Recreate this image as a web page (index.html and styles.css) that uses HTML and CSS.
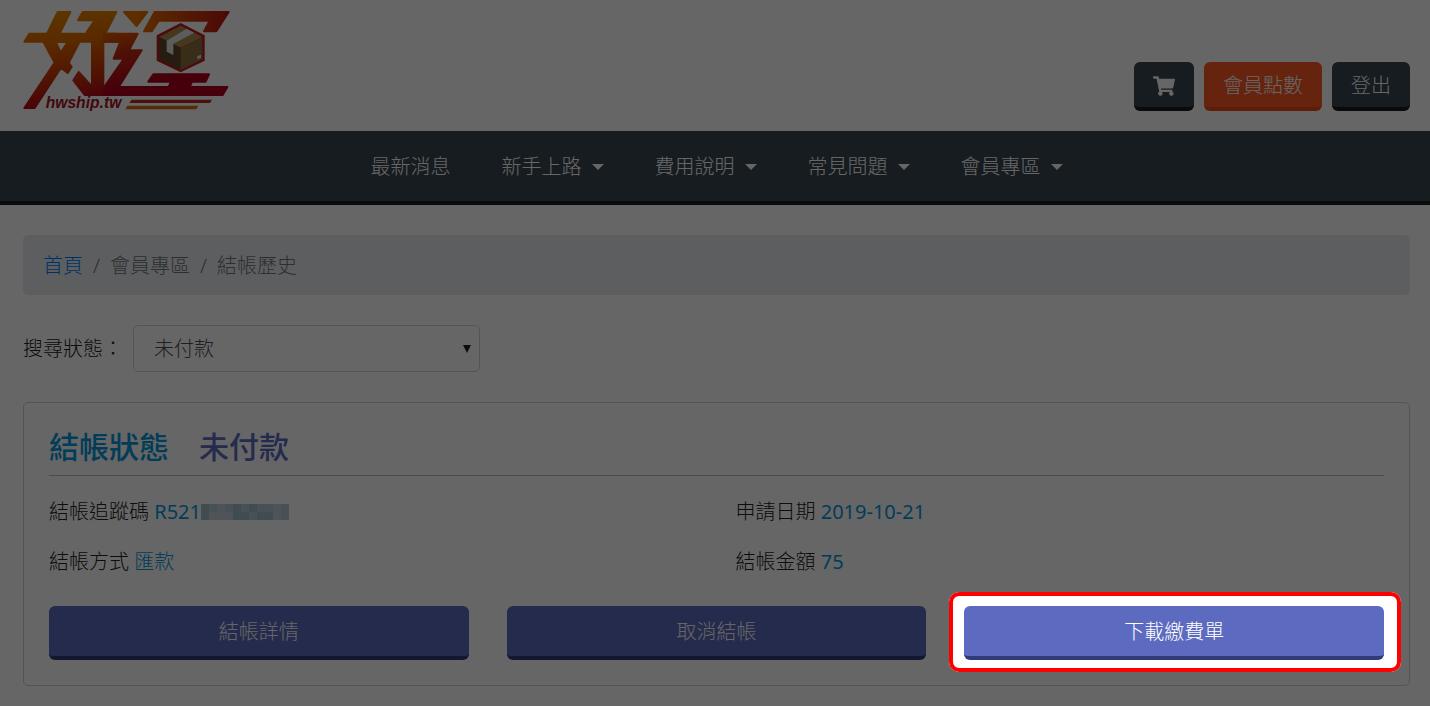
FILE: index.html
```
<!DOCTYPE html>
<html lang="zh-Hant">

<head>
    <meta charset="utf-8">
    <title>結帳歷史</title>
    <link rel="stylesheet" href="styles.css">
</head>

<body>
    <header class="header">
        <a class="logo" href="#" aria-label="hwship.tw">
            <svg width="210" height="104" viewBox="39 21 630 312">
                <defs>
                    <linearGradient id="fire" gradientUnits="userSpaceOnUse" x1="200" y1="30" x2="250" y2="320">
                        <stop offset="0" stop-color="#e88400" />
                        <stop offset=".3" stop-color="#e06a00" />
                        <stop offset=".65" stop-color="#c83408" />
                        <stop offset=".9" stop-color="#b80a18" />
                    </linearGradient>
                    <linearGradient id="road" gradientUnits="userSpaceOnUse" x1="310" y1="90" x2="360" y2="260">
                        <stop offset="0" stop-color="#e06000" />
                        <stop offset=".4" stop-color="#c42c10" />
                        <stop offset="1" stop-color="#b0001c" />
                    </linearGradient>
                    <linearGradient id="roof" gradientUnits="userSpaceOnUse" x1="380" y1="30" x2="650" y2="60">
                        <stop offset="0" stop-color="#e87400" />
                        <stop offset="1" stop-color="#c01814" />
                    </linearGradient>
                </defs>
                <g stroke-linejoin="round" stroke-width="6">
                    <path fill="url(#fire)" stroke="url(#fire)" fill-rule="evenodd" d="M143 36h38l-32 65h90l-9-5 24-35h-50l14-25h101l-33 65h34v24h-40v160h-56l-34-44 16-25 40 44V125h-37l-33 63 9 13-12 18-20-16-79 121H43l91-136-34-63H43l15-24h53zM137 126l15 32 21-32z" />
                    <path fill="url(#road)" stroke="url(#road)" d="M280 101h103l-26 50h38l-69 110h150l7-16h-68l15-22h167l-10 22h-41l-7 16h113l-14 24H280v-20l62-89h-31l20-51h-51z" />
                    <path fill="url(#roof)" stroke="url(#roof)" d="M342 36h70l-32 42zM434 36h222l-37 58h-37l17-32H446l-21 32h-23z" />
                </g>
                <path fill="#b82818" d="M365 299h241l-6 10H358z" />
                <path fill="#cc7410" d="M352 317h213l-6 11H346z" />
                <path fill="#c01820" d="M512 69l72 37v76l-72 35-72-35v-76z" />
                <path fill="#b08a50" d="M512 77l65 34-65 32-65-32z" />
                <path fill="#60482a" d="M447 111l65 32v67l-65-32z" />
                <path fill="#8c7040" d="M577 111l-65 32v67l65-32z" />
                <path fill="#e6e6e6" d="M530 86l23 12-63 33v34l-20-10v-33zM562 169l11-5v9l-11 5z" />
                <text class="logo-text" x="107" y="323">hwship.tw</text>
            </svg>
        </a>
        <div class="tools">
            <button class="btn btn-dark" type="button" aria-label="購物車">
                <svg width="22" height="20" viewBox="0 0 576 512" fill="currentColor">
                    <path d="M528 301l47-208c4-15-8-29-23-29H159l-9-45c-2-11-12-19-24-19H24C11 0 0 11 0 24v16c0 13 11 24 24 24h70l70 343a56 56 0 1 0 67 9h210a56 56 0 1 0 64-10l5-25c4-15-8-29-23-29H218l-6-32h293c11 0 20-8 23-19z" />
                </svg>
            </button>
            <button class="btn btn-orange" type="button">會員點數</button>
            <button class="btn btn-dark" type="button">登出</button>
        </div>
    </header>

    <nav class="nav">
        <a href="#">最新消息</a>
        <a class="dropdown" href="#">新手上路</a>
        <a class="dropdown" href="#">費用說明</a>
        <a class="dropdown" href="#">常見問題</a>
        <a class="dropdown" href="#">會員專區</a>
    </nav>

    <main class="content">
        <div class="breadcrumb">
            <a href="#">首頁</a>
            <span>會員專區</span>
            <span>結帳歷史</span>
        </div>

        <div class="search">
            <label for="status">搜尋狀態：</label>
            <div class="select">
                <select id="status">
                    <option>未付款</option>
                </select>
            </div>
        </div>

        <section class="card">
            <h2><span>結帳狀態</span><span class="state">未付款</span></h2>
            <div class="info">
                <div>結帳追蹤碼 <span class="value num">R521</span><svg class="mosaic" width="88" height="16" viewBox="0 0 11 2" shape-rendering="crispEdges">
                        <path fill="#b4ccd8" d="M0 0h11v2H0z" />
                        <path fill="#a0bccc" d="M0 0h1v2H0zM4 0h1v2H4zM5 1h1v1H5zM6 0h1v1H6zM7 1h2v1H7z" />
                        <path fill="#c8d0dc" d="M2 0h1v1H2zM1 1h3v1H1zM9 0h1v2H9z" />
                    </svg></div>
                <div>申請日期 <span class="value num">2019-10-21</span></div>
                <div>結帳方式 <span class="value">匯款</span></div>
                <div>結帳金額 <span class="value num">75</span></div>
            </div>
            <div class="actions">
                <button class="btn btn-indigo" type="button">結帳詳情</button>
                <button class="btn btn-indigo" type="button">取消結帳</button>
                <div class="spotlight">
                    <button class="btn btn-indigo" type="button">下載繳費單</button>
                </div>
            </div>
        </section>
    </main>
</body>
</html>
```

FILE: styles.css
```
* {
    box-sizing: border-box;
}

body {
    margin: 0;
    background: #fff;
    color: #212121;
    font: 300 20px/30px "Noto Sans", "Noto Sans CJK TC", sans-serif;
}

a {
    color: #007bff;
    text-decoration: none;
}

.header {
    display: flex;
    justify-content: space-between;
    align-items: flex-end;
    padding: 7px 20px 20px 23px;
}

.logo svg {
    display: block;
}

.logo-text {
    fill: #a81020;
    font: italic bold 47px "Liberation Sans", sans-serif;
}

.tools {
    display: flex;
    gap: 10px;
}

.btn {
    display: flex;
    align-items: center;
    justify-content: center;
    padding: 9px 19px 7px;
    border: 0;
    border-bottom: 4px solid;
    border-radius: 6px;
    color: #fff;
    font: inherit;
    cursor: pointer;
}

.tools .btn {
    height: 49px;
}

.btn-dark {
    background: #37474f;
    border-color: #1a1a1a;
}

.btn-orange {
    background: #ff5722;
    border-color: #e64a19;
}

.btn-indigo {
    width: 100%;
    height: 54px;
    background: #5c6bc0;
    border-color: #2f3c78;
}

.nav {
    display: flex;
    justify-content: center;
    gap: 51px;
    padding: 21px 20px 19px 23px;
    background: #37474f;
    border-bottom: 4px solid #1a1a1a;
}

.nav a {
    color: #fff;
}

.dropdown {
    display: flex;
    align-items: center;
    gap: 10px;
}

.dropdown::after {
    content: "";
    border: 6px solid transparent;
    border-top-color: #fff;
    border-bottom: 0;
}

.content {
    padding: 30px 20px 20px 23px;
}

.breadcrumb {
    display: flex;
    padding: 16px 20px 14px;
    border-radius: 5px;
    background: #e9ecef;
    color: #6c757d;
}

.breadcrumb span::before {
    content: "/";
    padding: 0 10px;
}

.search {
    display: flex;
    align-items: center;
    gap: 10px;
    margin: 30px 0;
}

.select {
    position: relative;
    width: 25%;
}

.select select {
    display: block;
    width: 100%;
    height: 47px;
    padding: 0 20px;
    border: 1px solid #ced4da;
    border-radius: 5px;
    background: #fff;
    color: #495057;
    font: inherit;
    appearance: none;
}

.select::after {
    content: "";
    position: absolute;
    top: 20px;
    right: 9px;
    border: 4px solid transparent;
    border-top: 8px solid #212121;
    border-bottom: 0;
    pointer-events: none;
}

.card {
    padding: 25px;
    border: 1px solid #d0d0d0;
    border-radius: 5px;
}

.card h2 {
    display: flex;
    gap: 30px;
    margin: 0 0 11px;
    padding-bottom: 9px;
    border-bottom: 1px solid #bdbdbd;
    color: #0398dc;
    font-size: 30px;
    font-weight: 500;
    line-height: 38px;
}

.card .state {
    color: #5c6bc0;
}

.info {
    display: grid;
    grid-template-columns: 1fr 1fr;
    column-gap: 38px;
    line-height: 50px;
}

.value {
    color: #0398dc;
}

.num {
    font-weight: 400;
}

.mosaic {
    vertical-align: -1px;
}

.actions {
    display: grid;
    grid-template-columns: 1fr 1fr 1fr;
    gap: 38px;
    margin-top: 19px;
}

.spotlight {
    position: relative;
}

/* red frame, everything outside of it is dimmed */
.spotlight::after {
    content: "";
    position: absolute;
    inset: -14px -17px -12px -15px;
    border: 4px solid #f00;
    border-radius: 10px;
    box-shadow: 0 0 0 2000px rgba(0, 0, 0, .6);
    pointer-events: none;
}
```
